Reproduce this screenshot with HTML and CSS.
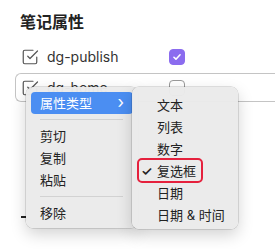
FILE: index.html
```html
<!DOCTYPE html>
<html lang="zh-CN">
<head>
    <meta charset="UTF-8">
    <meta name="viewport" content="width=device-width, initial-scale=1.0">
    <title>笔记属性</title>
    <link rel="stylesheet" href="styles.css">
</head>
<body>
    <div class="page">
        <h2 class="title">笔记属性</h2>
        <div class="props">
            <div class="row">
                <div class="key">
                    <svg class="key-icon" viewBox="0 0 24 24"><path d="m9 11 3 3L22 4"/><path d="M21 12v7a2 2 0 0 1-2 2H5a2 2 0 0 1-2-2V5a2 2 0 0 1 2-2h11"/></svg>
                    <span class="key-name">dg-publish</span>
                </div>
                <span class="check on">
                    <svg viewBox="0 0 16 16"><path d="M4.5 8.3l2.3 2.2 4.7-5"/></svg>
                </span>
            </div>
            <div class="row active">
                <div class="key">
                    <svg class="key-icon" viewBox="0 0 24 24"><path d="m9 11 3 3L22 4"/><path d="M21 12v7a2 2 0 0 1-2 2H5a2 2 0 0 1-2-2V5a2 2 0 0 1 2-2h11"/></svg>
                    <span class="key-name">dg-home</span>
                </div>
                <span class="check"></span>
            </div>
            <div class="add-row"><span class="dash"></span></div>
        </div>
    </div>

    <!-- 右键菜单 -->
    <div class="menu main-menu">
        <div class="item selected">属性类型<span class="chev">›</span></div>
        <div class="sep"></div>
        <div class="item">剪切</div>
        <div class="item">复制</div>
        <div class="item">粘贴</div>
        <div class="sep"></div>
        <div class="item">移除</div>
    </div>
    <div class="menu sub-menu">
        <div class="item">文本</div>
        <div class="item">列表</div>
        <div class="item">数字</div>
        <div class="item checked"><span class="tick">✓</span>复选框</div>
        <div class="item">日期</div>
        <div class="item">日期 &amp; 时间</div>
    </div>
</body>
</html>
```

FILE: styles.css
```css
body {
    margin: 0;
    background-color: #fff;
    font-family: "Inter", "Noto Sans CJK SC", sans-serif;
    color: #222;
    overflow: hidden;
    width: 275px;
    height: 249px;
}
.page {
    padding-top: 10px;
}
.title {
    margin: 0 0 8px 20px;
    font-size: 16px;
    line-height: 24px;
    font-weight: 600;
}
.props {
    margin-left: 15px;
}
.row {
    height: 27px;
    display: flex;
    align-items: center;
    padding-left: 5px;
    border: 1.5px solid transparent;
    border-right: none;
    border-radius: 6px 0 0 6px;
    margin-bottom: 2px;
}
.row.active {
    border-color: #c4c4c4;
}
.key {
    width: 148px;
    display: flex;
    align-items: center;
    gap: 8px;
}
.key-icon {
    width: 18px;
    height: 18px;
    fill: none;
    stroke: #555;
    stroke-width: 1.6;
    stroke-linecap: round;
    stroke-linejoin: round;
}
.key-name {
    font-size: 14px;
    color: #333;
}
.add-row {
    padding: 112px 0 0 6px;
}
.dash {
    display: block;
    width: 5px;
    height: 2px;
    background-color: #222;
}
.check {
    width: 14px;
    height: 14px;
    border: 1px solid #9a9a9a;
    border-radius: 4px;
    display: flex;
}
.check.on {
    border-color: #8b6cef;
    background-color: #8b6cef;
}
.check svg {
    width: 14px;
    height: 14px;
    fill: none;
    stroke: #fff;
    stroke-width: 1.8;
    stroke-linecap: round;
    stroke-linejoin: round;
}
.menu {
    position: absolute;
    top: 87px;
    background-color: rgba(234, 234, 234, 0.97);
    border-radius: 7px;
    box-shadow: 0 0 0 0.5px rgba(0, 0, 0, 0.22), 0 6px 16px rgba(0, 0, 0, 0.18);
    font-size: 13px;
    color: #222;
}
.main-menu {
    left: 26px;
    width: 112px;
    padding: 5px 0 4px;
}
.sub-menu {
    left: 132px;
    width: 106px;
    padding: 7px 0 3px;
}
.item {
    height: 22px;
    line-height: 22px;
    padding-left: 9px;
    margin: 0 5px;
    border-radius: 4px;
    position: relative;
}
.sub-menu .item {
    padding-left: 20px;
}
.item.selected {
    background-color: #4b8ef2;
    color: #fff;
    display: flex;
    justify-content: space-between;
    padding-right: 9px;
}
.chev {
    font-size: 17px;
    line-height: 21px;
}
.sep {
    height: 1px;
    background-color: #d2d2d2;
    margin: 5px 15px 5px 14px;
}
.tick {
    position: absolute;
    left: 4px;
    font-size: 13px;
    font-weight: 600;
}
.item.checked::after {
    content: "";
    position: absolute;
    left: 0;
    top: -2px;
    width: 62px;
    height: 21px;
    border: 2px solid #e5213d;
    border-radius: 5px;
}
```
